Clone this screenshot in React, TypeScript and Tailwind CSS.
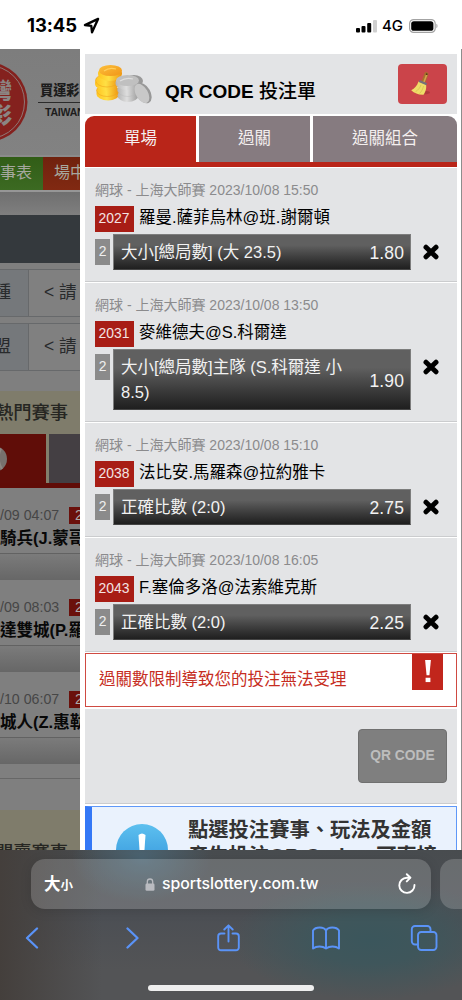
import { clsx } from "clsx";

interface Bet {
  id: string;
  time: string;
  match: string;
  pick: string;
  odds: string;
}

interface Game {
  time: string;
  teams: string;
}

const bets: Bet[] = [
  {
    id: "2027",
    time: "2023/10/08 15:50",
    match: "羅曼.薩菲烏林@班.謝爾頓",
    pick: "大小[總局數] (大 23.5)",
    odds: "1.80",
  },
  {
    id: "2031",
    time: "2023/10/08 13:50",
    match: "麥維德夫@S.科爾達",
    pick: "大小[總局數]主隊 (S.科爾達 小 8.5)",
    odds: "1.90",
  },
  {
    id: "2038",
    time: "2023/10/08 15:10",
    match: "法比安.馬羅森@拉約雅卡",
    pick: "正確比數 (2:0)",
    odds: "2.75",
  },
  {
    id: "2043",
    time: "2023/10/08 16:05",
    match: "F.塞倫多洛@法索維克斯",
    pick: "正確比數 (2:0)",
    odds: "2.25",
  },
];

const games: Game[] = [
  { time: "/09 04:07", teams: "騎兵(J.蒙哥" },
  { time: "/09 08:03", teams: "達雙城(P.羅" },
  { time: "/10 06:07", teams: "城人(Z.惠勒" },
];

function StatusBar() {
  return (
    <header className="flex h-[49px] shrink-0 items-center bg-white pl-[27px] pr-[24px] pt-[2px] font-['Inter','Noto_Sans_CJK_TC',sans-serif] text-black">
      <span className="w-[56px] text-[18.5px] font-bold leading-none tracking-[-0.1px]">13:45</span>
      <svg viewBox="0 0 16 16" className="h-[17px] w-[17px]" aria-hidden="true">
        <path
          d="M14.2 1.8 1.8 7.6l6 .8.7 6z"
          fill="none"
          stroke="currentColor"
          strokeWidth="2.2"
          strokeLinejoin="round"
        />
      </svg>
      <svg viewBox="0 0 22 14" className="ml-auto h-[14px] w-[22px]" aria-hidden="true">
        <rect x="0" y="9" width="4" height="4.5" rx="1" />
        <rect x="5.5" y="7" width="4" height="6.5" rx="1" />
        <rect x="11.2" y="4" width="4" height="9.5" rx="1" />
        <rect x="17" y="1" width="4" height="12.5" rx="1" fill="#cfcfcf" />
      </svg>
      <span className="ml-[4px] w-[21px] text-[15px] font-medium leading-none">4G</span>
      <svg viewBox="0 0 29 14" className="ml-[6px] h-[14px] w-[29px]" aria-hidden="true">
        <rect x="0.6" y="0.6" width="25.6" height="12.8" rx="4" fill="#fff" stroke="#a3a3a3" strokeWidth="1.2" />
        <rect x="2.2" y="2.2" width="22.2" height="9.6" rx="2.6" />
        <path d="M27.4 4.8c1.5.6 1.5 3.8 0 4.4z" fill="#a3a3a3" />
      </svg>
    </header>
  );
}

function Logo() {
  return (
    <div className="flex h-[106px] shrink-0 bg-gradient-to-b from-[#7d7d7d] to-[#828282]">
      <svg viewBox="0 0 30 106" className="h-[106px] w-[30px] shrink-0" aria-hidden="true">
        <circle cx="-12" cy="53" r="39.5" fill="#84211e" />
        <circle cx="-12" cy="53" r="36.5" fill="none" stroke="#8f7775" strokeWidth="1" />
        <text x="-10" y="49" fontSize="22" fontWeight="900" fill="#8b8583">
          灣
        </text>
        <text x="-10" y="74" fontSize="22" fontWeight="900" fill="#8b8583">
          彩
        </text>
      </svg>
      <div className="w-[50px] shrink-0 overflow-hidden whitespace-nowrap pl-[8px] pt-[33px] text-[#1c1c1c]">
        <div className="h-[20px] pl-[2px] text-[13.2px] font-black leading-[18px]">買運彩</div>
        <div className="h-px bg-[#2b2b2b]" />
        <div className="pl-[7px] pt-[3px] text-[10.5px] font-bold leading-[12px] tracking-[-0.2px]">TAIWAN</div>
      </div>
    </div>
  );
}

function FilterRow({ label }: { label: string }) {
  return (
    <div className="mb-[6px] flex h-[48px] shrink-0 border-y border-[#67696b] text-[17.5px] leading-[45px] text-[#282a2c]">
      <div className="flex w-[29px] shrink-0 justify-end overflow-hidden whitespace-nowrap border-r border-[#67696b] bg-[#75787b] pr-[17px]">
        {label}
      </div>
      <div className="w-[51px] overflow-hidden whitespace-nowrap bg-[#808080] pl-[15px]">{"< 請"}</div>
    </div>
  );
}

function Baseball() {
  return (
    <svg viewBox="0 0 20 30" className="h-[30px] w-[20px]" aria-hidden="true">
      <circle cx="-6" cy="15" r="13" fill="#77716e" />
      <path d="M1 4.500Q-4 15 2 25" fill="none" stroke="#8d8783" strokeWidth="2" />
    </svg>
  );
}

// Site behind the drawer, already dimmed
function Backdrop() {
  return (
    <aside className="flex h-full w-[80px] shrink-0 flex-col overflow-hidden bg-[#7f7f7f]">
      <Logo />
      <div className="h-[2px] shrink-0 bg-[#8b8b8b]" />
      <div className="flex h-[33px] shrink-0 overflow-hidden whitespace-nowrap text-[16px] leading-[32px] text-[#a6a89f]">
        <div className="w-[43px] shrink-0 bg-gradient-to-b from-[#315d16] to-[#3c6a22]">事表</div>
        <div className="w-[37px] shrink-0 bg-gradient-to-b from-[#70220e] to-[#812912] pl-[11px]">場中</div>
      </div>
      <div className="h-[2px] shrink-0 bg-[#969696]" />
      <div className="h-[23px] shrink-0 bg-gradient-to-b from-[#6f6f6f] to-[#7f7f7f]" />
      <div className="mb-[6px] h-[48px] shrink-0 bg-[#34393d]" />
      <FilterRow label="球種" />
      <FilterRow label="聯盟" />
      <div className="mt-[14px] flex h-[43px] shrink-0 justify-end whitespace-nowrap bg-[#7f7c6b] pr-[12px] text-[18.3px] font-medium leading-[43px] text-[#262622]">
        熱門賽事
      </div>
      <div className="flex h-[54px] shrink-0 gap-[3px] border-b-[5px] border-[#600c07] bg-[#827f6c]">
        <div className="flex w-[46px] items-center bg-[#600d08]">
          <Baseball />
        </div>
        <div className="w-[31px] bg-[#443f43]" />
      </div>
      <div className="shrink-0">
        {games.map((game) => (
          <div key={game.time} className="h-[92px] overflow-hidden whitespace-nowrap pt-[19px]">
            <div className="flex h-[17px] items-center">
              <span className="w-[69px] shrink-0 text-[14.2px] leading-[17px] text-[#464646]">{game.time}</span>
              <span className="h-[17px] w-[11px] shrink-0 overflow-hidden bg-[#6a100b] pl-[6px] text-[14px] leading-[17px] text-[#aaa]">
                2
              </span>
            </div>
            <div className="h-[29px] text-[16.5px] font-bold leading-[29px] text-[#080808]">{game.teams}</div>
            <div className="h-[33px] border-b border-t border-b-[#858585] border-t-[#626262] bg-gradient-to-b from-[#7b7b7b] to-[#636363]" />
          </div>
        ))}
      </div>
      <div className="mt-[14px] h-[32px] shrink-0 border-t border-[#676767]" />
      <div className="flex h-[60px] shrink-0 justify-end whitespace-nowrap bg-[#7f7c6b] pr-[12px] pt-[29px] text-[18.3px] font-medium leading-[27px] text-[#262622]">
        開賣賽事
      </div>
    </aside>
  );
}

function CoinsIcon() {
  return (
    <svg viewBox="0 0 58 42" className="h-[42px] w-[58px]" aria-hidden="true">
      <defs>
        <linearGradient id="gold" x1="0" x2="1">
          <stop offset="0" stopColor="#ffc421" />
          <stop offset="0.45" stopColor="#ffe044" />
          <stop offset="1" stopColor="#ee9612" />
        </linearGradient>
        <linearGradient id="goldTop" x1="0" y1="0" x2="1" y2="1">
          <stop offset="0" stopColor="#fcc03c" />
          <stop offset="1" stopColor="#f19517" />
        </linearGradient>
        <linearGradient id="silver" x1="0" x2="1">
          <stop offset="0" stopColor="#b5b5b5" />
          <stop offset="0.45" stopColor="#dedede" />
          <stop offset="1" stopColor="#9a9a9a" />
        </linearGradient>
      </defs>
      <g fill="url(#gold)">
        <ellipse cx="14" cy="29.500" rx="11.500" ry="7" />
        <ellipse cx="13.500" cy="26.500" rx="11" ry="6" stroke="#f0a41c" strokeWidth="0.6" />
        <ellipse cx="13" cy="19.500" rx="12" ry="7" />
        <ellipse cx="13" cy="16.500" rx="11.500" ry="6.500" stroke="#f0a41c" strokeWidth="0.6" />
        <ellipse cx="16" cy="9.500" rx="12" ry="7.500" />
      </g>
      <ellipse cx="16.500" cy="6.500" rx="11.500" ry="5.500" fill="url(#goldTop)" />
      <path d="M10 7q5-4 12-2" stroke="#ffcf5c" strokeWidth="1.2" fill="none" />
      <ellipse cx="40" cy="17" rx="9" ry="6" fill="#999" />
      <g fill="url(#silver)">
        <ellipse cx="34" cy="31.500" rx="10.500" ry="6.500" />
        <ellipse cx="34" cy="26" rx="10.500" ry="6.500" stroke="#b5b5b5" strokeWidth="0.4" />
        <ellipse cx="33.500" cy="19" rx="12" ry="7" />
      </g>
      <ellipse cx="33.500" cy="16.500" rx="11.500" ry="5.500" fill="#c0c0c0" />
      <path d="M26 17q6-4 13-2" stroke="#dedede" strokeWidth="1.2" fill="none" />
      <g transform="rotate(60 50 30)">
        <ellipse cx="49" cy="30" rx="11" ry="7" fill="#989898" />
        <ellipse cx="48.500" cy="31.500" rx="10.500" ry="6" fill="#c8c8c8" />
      </g>
    </svg>
  );
}

function BroomIcon() {
  return (
    <svg viewBox="0 0 24 26" className="mr-[3px] h-[26px] w-[24px]" aria-hidden="true">
      <ellipse cx="15" cy="21.500" rx="6" ry="1.800" fill="#8d272c" opacity="0.45" />
      <path d="M17.400 3 14 12" stroke="#a8702c" strokeWidth="4" strokeLinecap="round" />
      <path d="M17.600 4 14.600 12" stroke="#d2a14e" strokeWidth="1.600" strokeLinecap="round" />
      <circle cx="17.700" cy="3.200" r="0.9" fill="#5a3a18" />
      <path d="M9.500 10.500 17 13.500c.8 3-.5 8-2.500 10.200C10 24 5.500 22.500 2.200 19.300c3.500-1.800 5.900-4.500 7.300-8.800z" fill="#efdc68" />
      <path d="M12 14c-1 3-3 5-5.500 6.800M14.500 15c-.5 3-2 5.500-4 7.600" stroke="#d4bb50" strokeWidth="0.7" fill="none" />
      <path d="M10.200 10 17.700 13.200" stroke="#75707a" strokeWidth="2.200" />
    </svg>
  );
}

function BetRow({ bet }: { bet: Bet }) {
  return (
    <article className="mb-px border-b border-[#cbccce] bg-[#e3e4e6] pb-[11px] pl-[10px] pt-[11px]">
      <div className="h-[27px] whitespace-nowrap text-[14px] leading-[22px] text-[#8b8b8d]">
        網球 - 上海大師賽 {bet.time}
      </div>
      <div className="flex h-[28px] whitespace-nowrap">
        <span className="h-[26px] w-[39px] bg-[#a81d15] pr-px text-center text-[13.9px] leading-[25px] text-[#f3e4e3]">
          {bet.id}
        </span>
        <span className="ml-[5px] text-[16.5px] leading-[23px] text-black">{bet.match}</span>
      </div>
      <div className="flex items-start">
        <span className="mt-[5px] h-[26px] w-[15px] shrink-0 bg-[#8b8b8b] text-center text-[13.9px] leading-[25px] text-[#efefef]">
          2
        </span>
        <div className="ml-[3px] flex w-[298px] items-center justify-between border border-[#7d7d7d] border-b-[#444] bg-gradient-to-b from-[#606060] from-30% to-[#1f1f1f] pb-[3px] pl-[7px] pr-[6px] pt-[6px] text-[#f2f2f2]">
          <span className="w-[232px] text-[16.5px] leading-[25px]">
            <span className="relative -top-px">{bet.pick}</span>
          </span>
          <span className="text-[17.5px] leading-[25px] tracking-[0.1px]">{bet.odds}</span>
        </div>
        <button type="button" className="ml-[12px] mt-[10px]" aria-label={`移除 ${bet.id}`}>
          <svg viewBox="0 0 16 16" className="h-[16px] w-[16px]" aria-hidden="true">
            <path d="M3 3.200 13 12.800M13 3.200 3 12.800" stroke="#000" strokeWidth="5" strokeLinecap="round" />
          </svg>
        </button>
      </div>
    </article>
  );
}

const tabs = [
  { label: "單場", width: "w-[111px]", active: true },
  { label: "過關", width: "w-[111px]", active: false },
  { label: "過關組合", width: "w-[144px]", active: false },
];

function BetSlip() {
  return (
    <main className="flex h-full w-[381px] shrink-0 flex-col overflow-hidden bg-white pl-[5px] pr-[4px] pt-[5px]">
      <div className="flex h-[60px] shrink-0 items-start bg-[#e3e4e6] pl-[9px] pr-[10px] pt-[10px]">
        <CoinsIcon />
        <h1 className="ml-[13px] mt-[14px] whitespace-nowrap text-[19px] font-bold leading-[28px] text-black">
          QR CODE <span className="font-medium">投注單</span>
        </h1>
        <button
          type="button"
          className="ml-auto flex h-[40px] w-[49px] items-center justify-center rounded-[4px] bg-[#cb444a]"
          aria-label="清除"
        >
          <BroomIcon />
        </button>
      </div>
      <nav className="mt-[2px] flex h-[51px] shrink-0 gap-[3px] overflow-hidden rounded-t-[9px] border-b-[5px] border-[#b92519]">
        {tabs.map((tab) => (
          <div
            key={tab.label}
            className={clsx(
              "h-[46px] shrink-0 text-center text-[16.5px] leading-[45px] text-[#f4efef]",
              tab.width,
              tab.active ? "bg-[#b92519]" : "bg-[#867b80]",
            )}
          >
            {tab.label}
          </div>
        ))}
      </nav>
      <div className="mt-px shrink-0">
        {bets.map((bet) => (
          <BetRow key={bet.id} bet={bet} />
        ))}
      </div>
      <div className="flex h-[54px] shrink-0 justify-between border border-[#cf4a42] bg-white pl-[13px] pr-[13px]">
        <p className="whitespace-nowrap text-[16.5px] leading-[51px] text-[#c62d22]">過關數限制導致您的投注無法受理</p>
        <div className="flex h-[36px] w-[31px] justify-center bg-[#c1261c] pt-[5px]">
          <svg viewBox="0 0 8 26" className="h-[25px] w-[8px]" aria-hidden="true">
            <path d="M1 1h6l-1.500 16h-3z" fill="#fff" />
            <rect x="1.500" y="19.500" width="5" height="4.500" fill="#fff" />
          </svg>
        </div>
      </div>
      <div className="mt-[2px] flex h-[95px] shrink-0 justify-end border-b border-[#cbccce] bg-[#e3e4e6] pr-[10px] pt-[20px]">
        <button
          type="button"
          className="h-[54px] w-[89px] rounded-[4px] border border-[#707070] bg-[#7f7f7f] text-[13.8px] font-bold text-[#bdbdbd]"
        >
          QR CODE
        </button>
      </div>
      <div className="mt-[2px] flex h-[90px] shrink-0 border border-l-[7px] border-[#5f98f8] border-l-[#3478f6] bg-[#eaf2fd] pl-[24px]">
        <svg viewBox="0 0 52 52" className="mt-[17px] h-[52px] w-[52px] shrink-0" aria-hidden="true">
          <defs>
            <linearGradient id="info" x1="0" y1="0" x2="0" y2="1">
              <stop offset="0" stopColor="#5dc0ef" />
              <stop offset="1" stopColor="#2f8fd8" />
            </linearGradient>
          </defs>
          <circle cx="26" cy="26" r="26" fill="url(#info)" />
          <path d="M22.500 11q3.500-3 7 0l-1.500 22h-4z" fill="#fff" />
          <circle cx="26" cy="40" r="3.500" fill="#fff" />
        </svg>
        <p className="ml-[20px] pt-[10px] text-[20.3px] font-semibold leading-[26px] text-[#333]">
          <span className="block whitespace-nowrap">點選投注賽事、玩法及金額</span>
          <span className="block whitespace-nowrap">產生投注QR Code，可直接</span>
        </p>
      </div>
    </main>
  );
}

function BrowserBar() {
  return (
    <footer className="h-[150px] shrink-0 overflow-hidden bg-[#505254] bg-[radial-gradient(ellipse_140px_60px_at_370px_90px,#3b565c_0%,#3f565b_40%,transparent_100%),radial-gradient(ellipse_70px_45px_at_142px_8px,#4b6472_0%,transparent_100%),linear-gradient(to_right,#443f3c_0%,transparent_22%),linear-gradient(to_bottom,#484c4f_0%,#4c4f54_45%,#535456_80%)] font-['Inter','Noto_Sans_CJK_TC',sans-serif]">
      <div className="flex gap-[9px] pl-[31px] pt-[9px]">
        <div className="flex h-[50px] w-[400px] shrink-0 items-center rounded-[14px] bg-white/18 pl-[13px] pr-[15px] text-white shadow-[0_2px_12px_rgba(0,0,0,0.12)]">
          <span className="flex w-[101px] items-baseline font-bold leading-none">
            <span className="text-[16.5px]">大</span>
            <span className="text-[12.5px]">小</span>
          </span>
          <svg viewBox="0 0 10 13" className="h-[13px] w-[10px]" fill="none" aria-hidden="true">
            <path d="M2.300 6V3.700a2.700 2.700 0 0 1 5.400 0V6" stroke="#b9bbc0" strokeWidth="1.300" />
            <rect x="0.5" y="5.500" width="9" height="7.200" rx="1.300" fill="#b9bbc0" />
          </svg>
          <span className="ml-[7px] whitespace-nowrap text-[15.8px] font-medium leading-none">sportslottery.com.tw</span>
          <svg
            viewBox="0 0 18 22"
            className="ml-auto h-[22px] w-[18px]"
            fill="none"
            stroke="currentColor"
            strokeWidth="1.900"
            strokeLinecap="round"
            strokeLinejoin="round"
            aria-hidden="true"
          >
            <path d="M16.500 12A7.600 7.600 0 1 1 8.900 4.700H12" />
            <path d="m8.800 1.200 3.600 3.500-3.600 3.700" />
          </svg>
        </div>
        <div className="h-[50px] w-[40px] shrink-0 rounded-[14px] bg-white/18" />
      </div>
      <div className="flex h-[58px] items-center justify-between pl-[18px] pr-[24px] text-[#5a93f7]">
        <svg viewBox="0 0 28 22" className="h-[22px] w-[28px]" fill="none" stroke="currentColor" strokeWidth="2.300" strokeLinecap="round" strokeLinejoin="round" aria-hidden="true">
          <path d="M19 1.500 9 11l10 9.500" />
        </svg>
        <svg viewBox="0 0 28 22" className="h-[22px] w-[28px]" fill="none" stroke="currentColor" strokeWidth="2.300" strokeLinecap="round" strokeLinejoin="round" aria-hidden="true">
          <path d="m11.500 1.500 10 9.500-10 9.500" />
        </svg>
        <svg viewBox="0 0 28 28" className="h-[28px] w-[28px]" fill="none" stroke="currentColor" strokeWidth="1.900" strokeLinecap="round" strokeLinejoin="round" aria-hidden="true">
          <path d="M10.500 9.500H7A2.800 2.800 0 0 0 4.200 12.300V23.500A2.800 2.800 0 0 0 7 26.300h15a2.800 2.800 0 0 0 2.800-2.800V12.300A2.800 2.800 0 0 0 22 9.500h-3.500" />
          <path d="M14.500 17.500V1.500M10.300 5.500l4.200-4.200 4.200 4.200" />
        </svg>
        <svg viewBox="0 0 28 24" className="h-[24px] w-[28px]" fill="none" stroke="currentColor" strokeWidth="1.900" strokeLinecap="round" strokeLinejoin="round" aria-hidden="true">
          <path d="M14 4.500C12 .5 3.500.5 1 4.500v18c3.500-2.600 9.500-2.600 13 0 3.500-2.600 9.500-2.600 13 0v-18C24.500.5 16 .5 14 4.500zM14 4.500v18" />
        </svg>
        <svg viewBox="0 0 28 26" className="h-[26px] w-[28px]" fill="none" stroke="currentColor" strokeWidth="1.900" strokeLinecap="round" strokeLinejoin="round" aria-hidden="true">
          <rect x="8" y="7" width="18.500" height="18" rx="3.200" />
          <path d="M7.500 19.500H5A3.200 3.200 0 0 1 1.800 16.300V4.200A3.200 3.200 0 0 1 5 1h12.300a3.200 3.200 0 0 1 3.200 3.200V6.500" />
        </svg>
      </div>
      <div className="mx-auto mt-[18px] h-[6px] w-[166px] rounded-full bg-[#eeeeee]" />
    </footer>
  );
}

export default function App() {
  return (
    <div
      lang="zh-TW"
      className="flex h-[1000px] w-[462px] flex-col overflow-hidden bg-white font-['Liberation_Sans','Noto_Sans_CJK_TC',sans-serif]"
    >
      <StatusBar />
      <div className="flex h-[801px] shrink-0 overflow-hidden">
        <Backdrop />
        <BetSlip />
        <div className="w-px bg-[#8d8d8d]" />
      </div>
      <BrowserBar />
    </div>
  );
}
